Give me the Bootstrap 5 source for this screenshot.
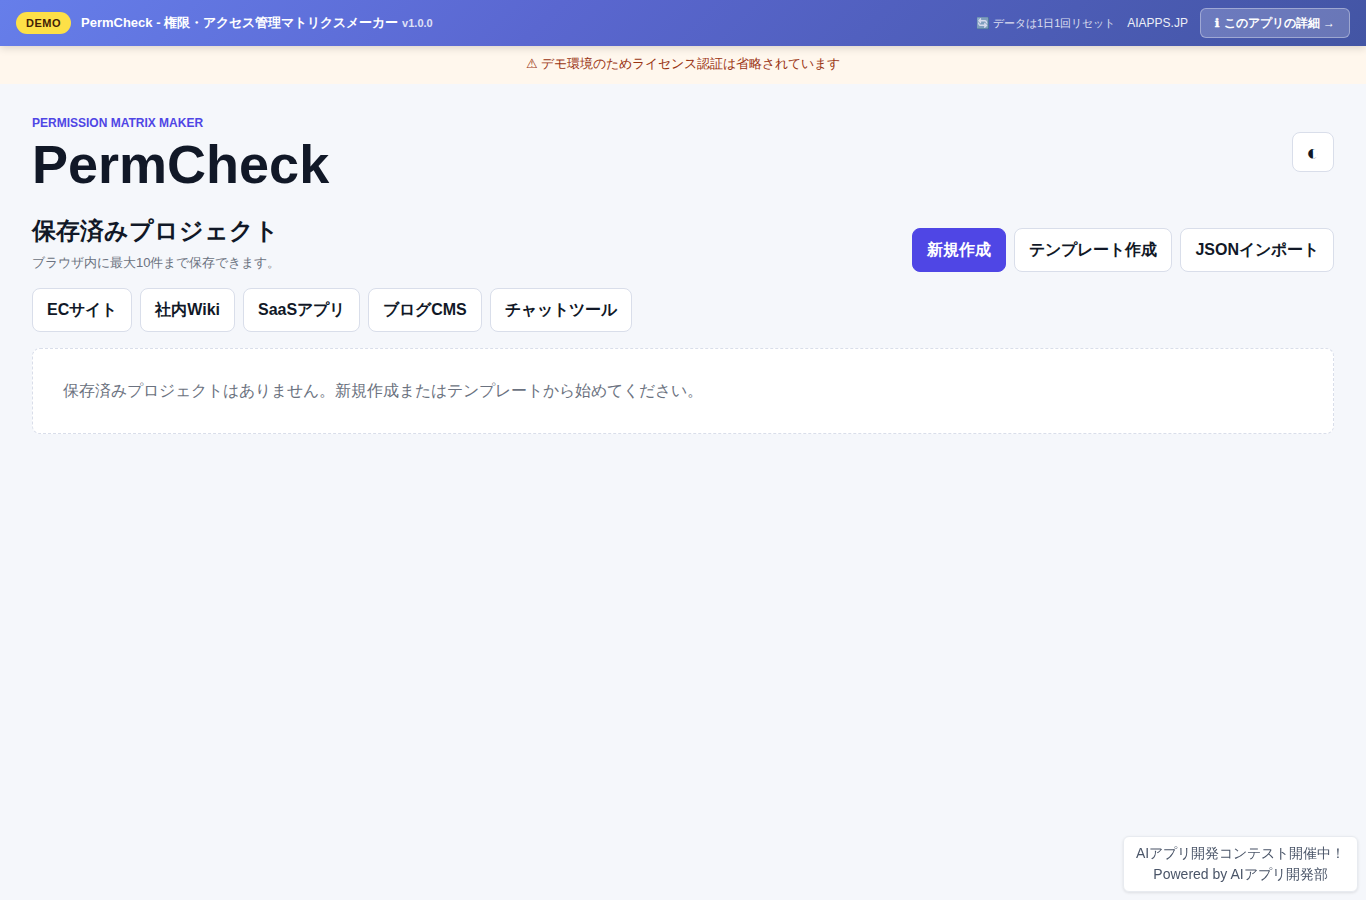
<!DOCTYPE html>
<html lang="ja">
<head>
<meta charset="utf-8">
<meta name="viewport" content="width=device-width, initial-scale=1">
<title>PermCheck</title>
<link href="https://cdn.jsdelivr.net/npm/bootstrap@5.3.0/dist/css/bootstrap.min.css" rel="stylesheet">
<style>
body{font-family:"Liberation Sans",Arial,sans-serif;background:#f5f7fb;color:#111827;font-size:16px;line-height:24px}
.demo-bar{height:46px;background:linear-gradient(135deg,#667eea 0%,#5a67d0 40%,#4355a4 100%);box-shadow:0 2px 8px rgba(0,0,0,.15);position:relative;z-index:2;font-size:13px;line-height:20px}
.demo-tag{background:#fde047;color:#422006;font-size:11px;line-height:14px;letter-spacing:.5px;padding:4px 10px}
.brand-group{gap:10px}
.link-group{gap:12px}
.ver{font-size:11px;opacity:.8;margin-left:.4px}
.reset-note{font-size:11px;opacity:.8}
.site-link{font-size:12px;opacity:.9}
.detail-link{font-size:12px;line-height:18px;height:30px;padding:5px 14px;border:1px solid rgba(255,255,255,.35);border-radius:6px;background:rgba(255,255,255,.2);color:#fff}
.info-glyph{font-family:"DejaVu Sans",sans-serif;line-height:1;-webkit-text-stroke:.5px #fff;padding-right:.8px}
.notice{height:38px;background:#fff7ed;color:#9a3412;font-size:13px;line-height:20px;padding-top:8px}
.page{padding:32px 32px 0}
.eyebrow{color:#4f46e5;font-size:12px;line-height:14px}
.app-title{font-size:54px;line-height:54px;margin-top:7px}
.title-row{height:72px}
.section-title{font-size:24px;line-height:38px}
.hint{font-size:13px;line-height:18px;color:#6b7280}
.action{--bs-btn-padding-x:14px;--bs-btn-padding-y:0;--bs-btn-font-weight:700;--bs-btn-line-height:24px;--bs-btn-bg:#fff;--bs-btn-color:#111827;--bs-btn-border-color:#d9deea;--bs-btn-border-radius:8px;height:44px}
.action.main{--bs-btn-bg:#4f46e5;--bs-btn-color:#fff;--bs-btn-border-color:#4f46e5}
.theme{width:42px;height:40px;padding:2px 0 0;font-size:22px}
.empty{border:1px dashed #d9deea;border-radius:8px;padding:30px;height:86px;color:#6b7280}
.promo{right:8px;bottom:8px;width:235px;height:56px;border:1px solid #e8ebf0;border-radius:6px;color:#4a5568;font-size:14px;line-height:21px;padding-top:6px;box-shadow:0 1px 3px rgba(0,0,0,.1)}
</style>
</head>
<body>
<header class="demo-bar d-flex align-items-center justify-content-between px-3 text-white">
  <div class="brand-group d-flex align-items-center">
    <span class="demo-tag rounded-pill fw-bold">DEMO</span>
    <span class="fw-bold">PermCheck - 権限・アクセス管理マトリクスメーカー <span class="ver">v1.0.0</span></span>
  </div>
  <div class="link-group d-flex align-items-center">
    <span class="reset-note">🔄 データは1日1回リセット</span>
    <span class="site-link">AIAPPS.JP</span>
    <a class="detail-link fw-bold text-decoration-none" href="#"><span class="info-glyph">ℹ</span> このアプリの詳細 →</a>
  </div>
</header>
<div class="notice text-center">⚠ デモ環境のためライセンス認証は省略されています</div>
<main class="page">
  <div class="title-row d-flex justify-content-between align-items-center">
    <div class="align-self-start">
      <div class="eyebrow fw-bold">PERMISSION MATRIX MAKER</div>
      <h1 class="app-title fw-bold mb-0">PermCheck</h1>
    </div>
    <button class="btn action theme" type="button" aria-label="テーマ">◐</button>
  </div>
  <section class="d-flex justify-content-between align-items-end mt-4">
    <div>
      <h2 class="section-title fw-bold mb-1">保存済みプロジェクト</h2>
      <p class="hint mb-0">ブラウザ内に最大10件まで保存できます。</p>
    </div>
    <div class="d-flex gap-2">
      <button class="btn action main" type="button">新規作成</button>
      <button class="btn action" type="button">テンプレート作成</button>
      <button class="btn action" type="button">JSONインポート</button>
    </div>
  </section>
  <div class="d-flex gap-2 my-3">
    <button class="btn action" type="button">ECサイト</button>
    <button class="btn action" type="button">社内Wiki</button>
    <button class="btn action" type="button">SaaSアプリ</button>
    <button class="btn action" type="button">ブログCMS</button>
    <button class="btn action" type="button">チャットツール</button>
  </div>
  <div class="empty bg-white">保存済みプロジェクトはありません。新規作成またはテンプレートから始めてください。</div>
</main>
<aside class="promo position-fixed bg-white text-center">AIアプリ開発コンテスト開催中！<br>Powered by AIアプリ開発部</aside>
<script src="https://cdn.jsdelivr.net/npm/bootstrap@5.3.0/dist/js/bootstrap.bundle.min.js"></script>
</body>
</html>
